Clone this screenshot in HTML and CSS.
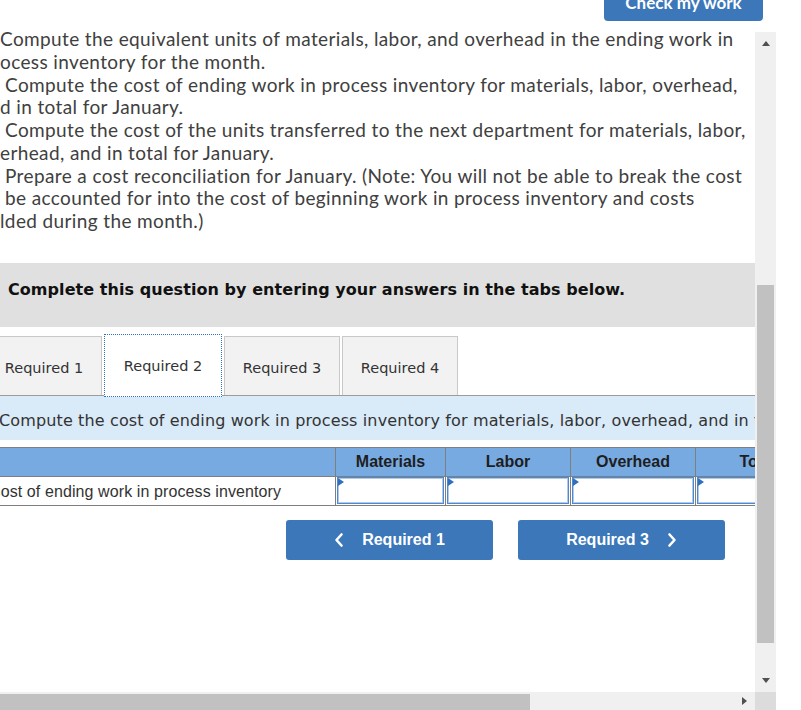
FILE: index.html
```html
<!DOCTYPE html>
<html lang="en">
<head>
<meta charset="utf-8">
<title>Question</title>
<link rel="stylesheet" href="styles.css">
</head>
<body>
<div class="topbar">
  <button class="check" type="button">Check my work</button>
</div>
<div class="frame">
  <div class="pane">
    <div class="question">
      <div class="line">Compute the equivalent units of materials, labor, and overhead in the ending work in</div>
      <div class="line">ocess inventory for the month.</div>
      <div class="line ind">Compute the cost of ending work in process inventory for materials, labor, overhead,</div>
      <div class="line">d in total for January.</div>
      <div class="line ind">Compute the cost of the units transferred to the next department for materials, labor,</div>
      <div class="line">erhead, and in total for January.</div>
      <div class="line ind">Prepare a cost reconciliation for January. (Note: You will not be able to break the cost</div>
      <div class="line ind">be accounted for into the cost of beginning work in process inventory and costs</div>
      <div class="line">lded during the month.)</div>
    </div>
    <div class="banner">Complete this question by entering your answers in the tabs below.</div>
    <div class="tabs">
      <div class="tab">Required 1</div>
      <div class="tab active">Required 2</div>
      <div class="tab">Required 3</div>
      <div class="tab">Required 4</div>
    </div>
    <div class="prompt">Compute the cost of ending work in process inventory for materials, labor, overhead, and in total for January.</div>
    <table class="grid">
      <colgroup>
        <col class="c-label"><col class="c-mat"><col class="c-num"><col class="c-num"><col class="c-num">
      </colgroup>
      <thead>
        <tr><th></th><th>Materials</th><th>Labor</th><th>Overhead</th><th>Total</th></tr>
      </thead>
      <tbody>
        <tr>
          <td class="label">Cost of ending work in process inventory</td>
          <td class="cell"><div class="inp"><span class="flag"></span></div></td>
          <td class="cell"><div class="inp"><span class="flag"></span></div></td>
          <td class="cell"><div class="inp"><span class="flag"></span></div></td>
          <td class="cell"><div class="inp"><span class="flag"></span></div></td>
        </tr>
      </tbody>
    </table>
    <div class="nav">
      <button class="navbtn" type="button">
        <svg class="chev" width="10" height="16" viewBox="0 0 10 16"><path d="M7.5 2.5 L2.5 8 L7.5 13.5" fill="none" stroke="#fff" stroke-width="2.6" stroke-linecap="round" stroke-linejoin="round"/></svg>
        <span>Required 1</span>
      </button>
      <button class="navbtn" type="button">
        <span>Required 3</span>
        <svg class="chev" width="10" height="16" viewBox="0 0 10 16"><path d="M2.5 2.5 L7.5 8 L2.5 13.5" fill="none" stroke="#fff" stroke-width="2.6" stroke-linecap="round" stroke-linejoin="round"/></svg>
      </button>
    </div>
  </div>
  <div class="vscroll">
    <div class="arrowbox"><span class="tri-up"></span></div>
    <div class="vthumb"></div>
    <div class="arrowbox bottom"><span class="tri-down"></span></div>
  </div>
  <div class="hscroll">
    <div class="hthumb"></div>
    <div class="harrow"><span class="tri-right"></span></div>
  </div>
  <div class="corner"></div>
</div>
</body>
</html>
```

FILE: styles.css
```css
* { box-sizing: border-box; }
html, body { margin: 0; padding: 0; background: #fff; }
body {
  width: 801px;
  height: 710px;
  overflow: hidden;
  font-family: "Liberation Sans", Arial, sans-serif;
}

.topbar {
  height: 28px;
  display: flex;
  justify-content: flex-end;
  padding-right: 38px;
}
.check {
  margin-top: -17px;
  width: 159px;
  height: 38px;
  border: none;
  border-radius: 0 0 4px 4px;
  background: #3b77b9;
  color: #fff;
  font-family: "Lato", sans-serif;
  font-weight: 700;
  font-size: 17px;
  padding: 0;
}

.frame {
  display: grid;
  grid-template-columns: 755px 21px;
  grid-template-rows: 664px 18px;
  width: 776px;
}

.pane {
  overflow: hidden;
  background: #fff;
}

.question {
  font-family: "Lato", sans-serif;
  font-size: 19px;
  letter-spacing: 0.38px;
  line-height: 22.75px;
  color: #404040;
  white-space: nowrap;
}
.line.ind { padding-left: 5px; }

.banner {
  margin-top: 30px;
  height: 64px;
  background: #e0e0e0;
  padding: 16px 0 0 8px;
  font-family: "DejaVu Sans", Verdana, sans-serif;
  font-weight: 700;
  font-size: 16px;
  letter-spacing: 0.06px;
  line-height: 22px;
  color: #111;
  white-space: nowrap;
}

.tabs {
  margin-top: 8px;
  margin-left: -14px;
  display: flex;
  align-items: flex-end;
  gap: 2px;
  height: 61px;
  border-bottom: 1px solid #9c9c9c;
}
.tab {
  width: 116px;
  height: 59px;
  padding-top: 4px;
  background: #f2f2f2;
  border: 1px solid #c9c9c9;
  border-bottom: none;
  display: flex;
  align-items: center;
  justify-content: center;
  font-family: "DejaVu Sans", Verdana, sans-serif;
  font-size: 14.5px;
  color: #333;
}
.tab.active {
  width: 118px;
  height: 63px;
  margin-bottom: -2px;
  padding-top: 2px;
  background: #fff;
  border: 1px dotted #2f6fc6;
}

.prompt {
  height: 44px;
  background: #d9eaf8;
  margin-left: -1px;
  padding-top: 5px;
  font-family: "DejaVu Sans", Verdana, sans-serif;
  font-size: 16px;
  letter-spacing: 0.13px;
  line-height: 39px;
  color: #333;
  white-space: nowrap;
}

.grid {
  margin-top: 7px;
  margin-left: -16px;
  border-collapse: collapse;
  table-layout: fixed;
  width: 836px;
}
.c-label { width: 351px; }
.c-mat { width: 110px; }
.c-num { width: 125px; }
.grid th {
  height: 29px;
  background: #78aae2;
  border: 1px solid #7f7f7f;
  font-family: "Liberation Sans", Arial, sans-serif;
  font-weight: 700;
  font-size: 16px;
  color: #1e1e1e;
  padding: 0;
  text-align: center;
}
.grid td {
  height: 29px;
  border: 1px solid #7f7f7f;
  padding: 0;
}
.grid td.label {
  padding: 2px 0 0 4px;
  font-size: 16px;
  letter-spacing: 0.1px;
  color: #333;
  white-space: nowrap;
}
.grid td.cell { padding: 0 1px; }
.inp {
  position: relative;
  height: 27px;
  border: 1px solid #4f88cd;
  box-shadow: inset 0 0 0 1px #aecbed;
  background: #fff;
}
.flag {
  position: absolute;
  left: 0;
  top: 0;
  width: 0;
  height: 0;
  border-top: 4px solid transparent;
  border-bottom: 4px solid transparent;
  border-left: 6px solid #2f6fc0;
}

.nav {
  margin-top: 14px;
  margin-left: 286px;
  display: flex;
  gap: 25px;
}
.navbtn {
  width: 207px;
  height: 40px;
  border: none;
  border-radius: 3px;
  background: #3b77b9;
  color: #fff;
  font-family: "Liberation Sans", Arial, sans-serif;
  font-weight: 700;
  font-size: 16px;
  display: flex;
  align-items: center;
  justify-content: center;
  gap: 18px;
  padding: 0;
}
.chev { display: block; }

.vscroll {
  margin-top: 4px;
  background: #f0f0f0;
  display: flex;
  flex-direction: column;
}
.arrowbox {
  height: 22px;
  display: flex;
  align-items: center;
  justify-content: center;
}
.arrowbox.bottom {
  margin-top: auto;
  height: 23px;
}
.tri-up {
  width: 0; height: 0;
  border-left: 4.5px solid transparent;
  border-right: 4.5px solid transparent;
  border-bottom: 5px solid #505050;
}
.tri-down {
  width: 0; height: 0;
  border-left: 4.5px solid transparent;
  border-right: 4.5px solid transparent;
  border-top: 5px solid #505050;
}
.vthumb {
  margin: 231px 2px 0;
  height: 358px;
  background: #c1c1c1;
}

.hscroll {
  background: #f0f0f0;
  display: flex;
  align-items: flex-end;
}
.hthumb {
  width: 530px;
  height: 16px;
  background: #c1c1c1;
}
.harrow {
  margin-left: auto;
  width: 22px;
  height: 18px;
  display: flex;
  align-items: center;
  justify-content: center;
}
.tri-right {
  width: 0; height: 0;
  border-top: 4.5px solid transparent;
  border-bottom: 4.5px solid transparent;
  border-left: 5px solid #505050;
}
.corner { background: #dcdcdc; }
```
